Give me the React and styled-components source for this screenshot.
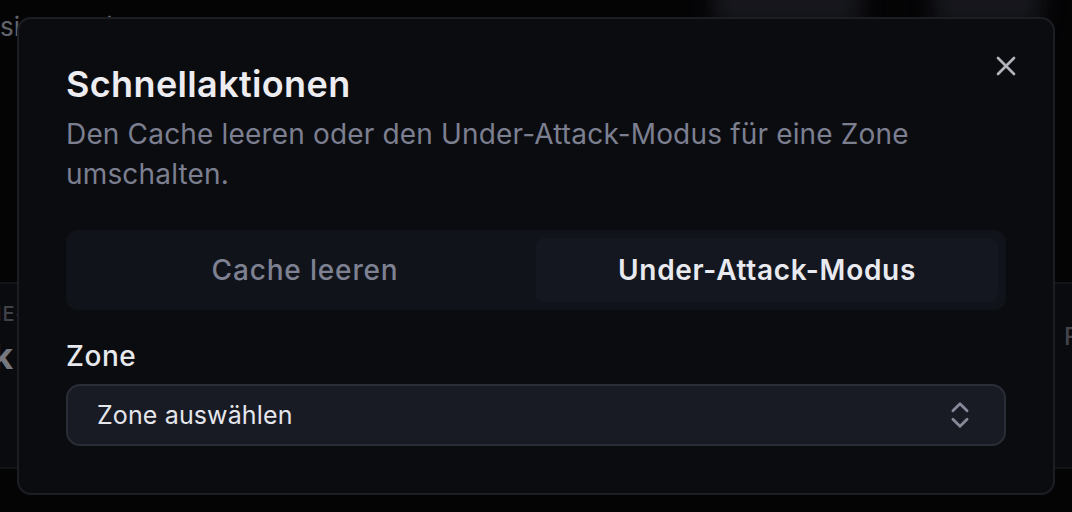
import styled, { createGlobalStyle } from "styled-components";
import { X, ChevronsUpDown } from "lucide-react";

const GlobalStyle = createGlobalStyle`
  * {
    box-sizing: border-box;
  }

  body {
    background: #050507;
    font-family: Inter, "Noto Sans", sans-serif;
    margin: 0;
    overflow: hidden;
  }
`;

const stats = [
  { label: "Cache-Anfragen", value: "1,2k" },
  { label: "Bandbreite", value: "84 GB" },
  { label: "Bedrohungen", value: "312" },
  { label: "Regeln", value: "", pad: 38 },
];

export default function App() {
  return (
    <>
      <GlobalStyle />
      <Page>
        <TopBar>
          <PageTitle>sicherheit und Verwaltung</PageTitle>
          <TopActions>
            <GhostButton $width={150} />
            <GhostButton $width={110} />
          </TopActions>
        </TopBar>
        <StatsRow>
          {stats.map((s) => (
            <StatCard key={s.label} $pad={s.pad}>
              <StatLabel $big={!s.value}>{s.label}</StatLabel>
              {s.value && <StatValue>{s.value}</StatValue>}
            </StatCard>
          ))}
        </StatsRow>
      </Page>

      <Overlay />
      <Dialog role="dialog">
        <CloseButton aria-label="Schließen">
          <X size={32} strokeWidth={2} />
        </CloseButton>

        <Header>
          <Title>Schnellaktionen</Title>
          <Description>
            Den Cache leeren oder den Under-Attack-Modus für eine Zone
            umschalten.
          </Description>
        </Header>

        <TabsList>
          <TabTrigger>Cache leeren</TabTrigger>
          <TabTrigger $active>Under-Attack-Modus</TabTrigger>
        </TabsList>

        <Field>
          <Label>Zone</Label>
          <SelectTrigger>
            <span>Zone auswählen</span>
            <ChevronsUpDown size={34} strokeWidth={2} />
          </SelectTrigger>
        </Field>
      </Dialog>
    </>
  );
}

const Page = styled.div`
  display: flex;
  flex-direction: column;
  height: 512px;
  margin-left: -84px;
  overflow: hidden;
  width: 1156px;
`;

const TopBar = styled.div`
  align-items: center;
  display: flex;
  height: 44px;
  justify-content: space-between;
  padding: 4px 0 0 84px;
`;

const PageTitle = styled.h2`
  color: #74767f;
  font-size: 26px;
  font-weight: 400;
  margin: 0;
  position: relative;
  top: 2px;
`;

const TopActions = styled.div`
  display: flex;
  gap: 70px;
  margin-right: 30px;
  margin-top: -40px;
`;

const GhostButton = styled.div`
  background: #1a1b21;
  border-radius: 12px;
  filter: blur(10px);
  height: 50px;
  width: ${(p) => p.$width}px;
`;

const StatsRow = styled.div`
  display: grid;
  gap: 24px;
  grid-template-columns: repeat(4, 350px);
  margin-top: 238px;
`;

const StatCard = styled.div`
  background: #0c0d11;
  border: 2px solid #17181d;
  border-radius: 14px;
  display: flex;
  flex-direction: column;
  gap: 8px;
  height: 187px;
  padding: ${(p) => p.$pad || 18}px 24px 24px 24px;
`;

const StatLabel = styled.div`
  color: ${(p) => (p.$big ? "#50525a" : "#4c4e56")};
  font-size: ${(p) => (p.$big ? 24 : 20)}px;
  font-weight: 500;
  letter-spacing: 0.04em;
  text-transform: ${(p) => (p.$big ? "none" : "uppercase")};
`;

const StatValue = styled.div`
  color: #8b8d94;
  font-size: 36px;
  font-weight: 700;
`;

const Overlay = styled.div`
  background: rgba(0, 0, 0, 0.15);
  inset: 0;
  position: fixed;
`;

const Dialog = styled.div`
  background: #0b0c10;
  border: 2px solid #1d1e24;
  border-radius: 14px;
  display: flex;
  flex-direction: column;
  left: 50%;
  padding: 47px;
  position: fixed;
  top: 50%;
  transform: translate(-50%, -50%);
  width: 1038px;
`;

const CloseButton = styled.button`
  align-items: center;
  background: none;
  border: none;
  color: #b2b4bb;
  display: flex;
  padding: 0;
  position: absolute;
  right: 31px;
  top: 31px;
`;

const Header = styled.div`
  display: flex;
  flex-direction: column;
  gap: 12px;
`;

const Title = styled.h2`
  color: #ececf1;
  font-size: 36px;
  font-weight: 600;
  letter-spacing: 0.01em;
  line-height: 1;
  margin: 0;
`;

const Description = styled.p`
  color: #7c7f90;
  font-size: 28px;
  letter-spacing: 0.006em;
  line-height: 40px;
  margin: 0;
`;

const TabsList = styled.div`
  background: #11131a;
  border-radius: 12px;
  display: grid;
  grid-template-columns: 1fr 1fr;
  height: 80px;
  margin-top: 36px;
  padding: 8px;
`;

const TabTrigger = styled.div`
  align-items: center;
  background: ${(p) => (p.$active ? "#141720" : "transparent")};
  border-radius: 8px;
  color: ${(p) => (p.$active ? "#e9eaef" : "#7e8192")};
  display: flex;
  font-size: 28px;
  font-weight: ${(p) => (p.$active ? 600 : 500)};
  justify-content: center;
  letter-spacing: ${(p) => (p.$active ? "0.025em" : "0.03em")};
`;

const Field = styled.div`
  display: flex;
  flex-direction: column;
  gap: 14px;
  margin-top: 32px;
`;

const Label = styled.label`
  color: #e8e9ee;
  font-size: 28px;
  font-weight: 500;
  letter-spacing: 0.02em;
  line-height: 1;
`;

const SelectTrigger = styled.button`
  align-items: center;
  background: #181a24;
  border: 2px solid #2a2c36;
  border-radius: 14px;
  color: #e4e6ec;
  display: flex;
  font-family: inherit;
  font-size: 25px;
  height: 62px;
  justify-content: space-between;
  letter-spacing: 0.005em;
  padding: 0 27px 0 29px;
  text-align: left;

  svg {
    color: #868997;
  }
`;
